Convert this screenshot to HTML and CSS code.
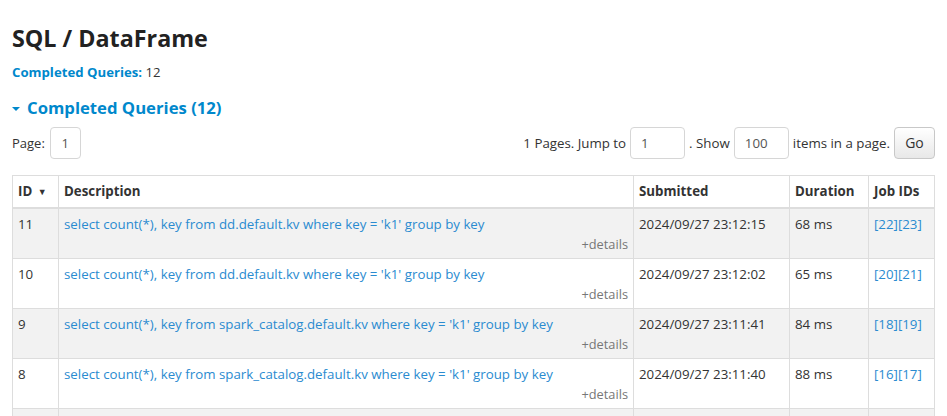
FILE: index.html
```html
<!DOCTYPE html>
<html>
<head>
<meta charset="utf-8">
<link rel="stylesheet" href="styles.css">
</head>
<body>
<div class="page">
  <h3 class="title">SQL / DataFrame</h3>
  <ul class="summary">
    <li><a class="summary-link">Completed Queries:</a> 12</li>
  </ul>
  <h4 class="section"><span class="arrow"></span>Completed Queries (12)</h4>
  <div class="pager">
    <div class="pager-left">Page: <span class="pbox page-num">1</span></div>
    <div class="pager-right">
      <span>1 Pages. Jump to</span>
      <span class="pbox wide">1</span>
      <span>. Show</span>
      <span class="pbox wide">100</span>
      <span>items in a page.</span>
      <span class="btn">Go</span>
    </div>
  </div>
  <table class="grid">
    <thead>
      <tr>
        <th class="c-id">ID <span class="sort">▼</span></th>
        <th class="c-desc">Description</th>
        <th class="c-sub">Submitted</th>
        <th class="c-dur">Duration</th>
        <th class="c-job">Job IDs</th>
      </tr>
    </thead>
    <tbody>
      <tr>
        <td>11</td>
        <td><a class="desc">select count(*), key from dd.default.kv where key = 'k1' group by key</a><div class="details">+details</div></td>
        <td>2024/09/27 23:12:15</td>
        <td>68 ms</td>
        <td><a class="job">[22]</a><a class="job">[23]</a></td>
      </tr>
      <tr>
        <td>10</td>
        <td><a class="desc">select count(*), key from dd.default.kv where key = 'k1' group by key</a><div class="details">+details</div></td>
        <td>2024/09/27 23:12:02</td>
        <td>65 ms</td>
        <td><a class="job">[20]</a><a class="job">[21]</a></td>
      </tr>
      <tr>
        <td>9</td>
        <td><a class="desc">select count(*), key from spark_catalog.default.kv where key = 'k1' group by key</a><div class="details">+details</div></td>
        <td>2024/09/27 23:11:41</td>
        <td>84 ms</td>
        <td><a class="job">[18]</a><a class="job">[19]</a></td>
      </tr>
      <tr>
        <td>8</td>
        <td><a class="desc">select count(*), key from spark_catalog.default.kv where key = 'k1' group by key</a><div class="details">+details</div></td>
        <td>2024/09/27 23:11:40</td>
        <td>88 ms</td>
        <td><a class="job">[16]</a><a class="job">[17]</a></td>
      </tr>
      <tr>
        <td>7</td>
        <td><a class="desc">select count(*), key from spark_catalog.default.kv where key = 'k1' group by key</a><div class="details">+details</div></td>
        <td>2024/09/27 23:11:39</td>
        <td>90 ms</td>
        <td><a class="job">[14]</a><a class="job">[15]</a></td>
      </tr>
    </tbody>
  </table>
</div>
</body>
</html>
```
FILE: styles.css
```css
html, body {
  margin: 0;
  padding: 0;
  background: #fff;
}
body {
  font-family: "Open Sans", "Noto Sans", sans-serif;
  font-size: 13px;
  color: #333;
  line-height: 20px;
}
.page {
  padding: 0 12px;
}
.title {
  margin: 0;
  padding-top: 21px;
  font-size: 23.3px;
  line-height: 34px;
  font-weight: 700;
  color: #222;
}
.summary {
  list-style: none;
  margin: 7px 0 0 0;
  padding: 0;
  font-size: 13.2px;
}
.summary-link {
  color: #0088cc;
  font-weight: 700;
}
.section {
  margin: 14px 0 0 0;
  font-size: 16.7px;
  line-height: 24px;
  font-weight: 700;
  color: #0088cc;
  display: flex;
  align-items: center;
}
.arrow {
  display: inline-block;
  width: 0;
  height: 0;
  border-left: 4px solid transparent;
  border-right: 4px solid transparent;
  border-top: 4px solid #0088cc;
  margin-right: 7px;
  margin-top: 2px;
}
.pager {
  display: flex;
  justify-content: space-between;
  align-items: center;
  margin-top: 7px;
}
.pager-left, .pager-right {
  display: flex;
  align-items: center;
}
.pager-right {
  font-size: 13.3px;
}
.pbox {
  display: inline-block;
  box-sizing: border-box;
  height: 32px;
  line-height: 30px;
  border: 1px solid #d6d6d6;
  border-radius: 4px;
  background: #fff;
  color: #555;
  padding: 0 10px;
}
.page-num {
  width: 31px;
  text-align: center;
  padding: 0;
  margin-left: 5px;
}
.wide {
  width: 55px;
  margin: 0 4px;
}
.btn {
  display: inline-block;
  box-sizing: border-box;
  height: 32px;
  line-height: 30px;
  width: 41px;
  text-align: center;
  border: 1px solid #c8c8c8;
  border-radius: 4px;
  background: linear-gradient(#ffffff, #e8e8e8);
  color: #333;
  margin-left: 4px;
  font-size: 14px;
}
.grid {
  margin-top: 16px;
  width: 923px;
  border-collapse: collapse;
  border: 1px solid #dddddd;
  table-layout: fixed;
  font-size: 13.3px;
}
.grid th, .grid td {
  border: 1px solid #dddddd;
  padding: 5px 5px 4px 5px;
  text-align: left;
  vertical-align: top;
}
.grid th {
  font-weight: 700;
  border-bottom: 2px solid #dddddd;
  padding-bottom: 5px;
}
.c-id { width: 35px; }
.c-desc { width: 564px; }
.c-sub { width: 145px; }
.c-dur { width: 68px; }
.c-job { width: auto; }
.sort {
  font-size: 9px;
  margin-left: 2px;
  vertical-align: 1px;
}
.grid tbody tr:nth-child(odd) td {
  background: #f2f2f2;
}
.desc, .job {
  color: #2a8bd0;
  text-decoration: none;
}
.details {
  text-align: right;
  color: #777;
  font-size: 12.8px;
  line-height: 20px;
}
```
